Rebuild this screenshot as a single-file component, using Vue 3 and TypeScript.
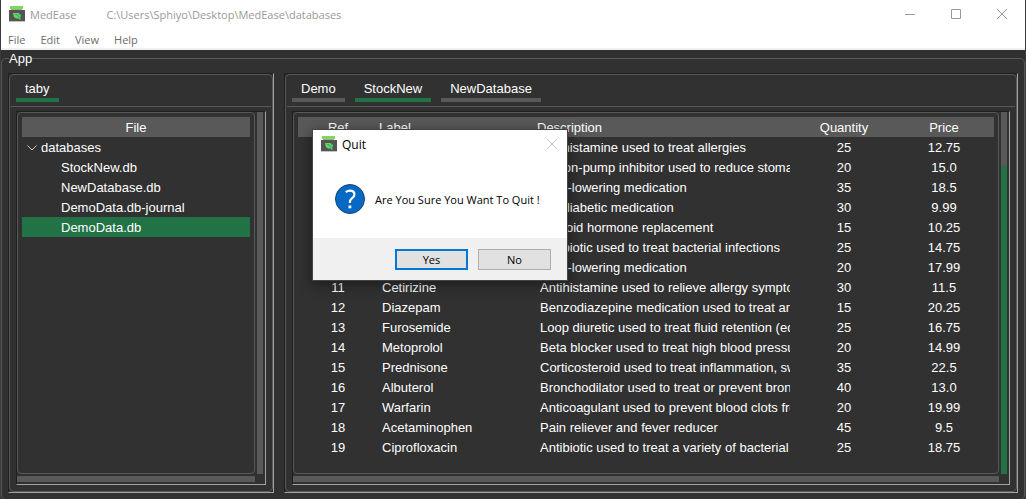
<script setup lang="ts">
import { ref } from 'vue'

interface StockRow {
  ref: number
  label: string
  description: string
  quantity: number
  price: string
}

const menus: string[] = ['File', 'Edit', 'View', 'Help']
const files: string[] = ['StockNew.db', 'NewDatabase.db', 'DemoData.db-journal', 'DemoData.db']
const tabs: string[] = ['Demo', 'StockNew', 'NewDatabase']
const selectedFile = ref('DemoData.db')
const activeTab = ref('StockNew')
const quitOpen = ref(true)

const rows: StockRow[] = [
  { ref: 4, label: 'Loratadine', description: 'Antihistamine used to treat allergies', quantity: 25, price: '12.75' },
  { ref: 5, label: 'Omeprazole', description: 'Proton-pump inhibitor used to reduce stomach', quantity: 20, price: '15.0' },
  { ref: 6, label: 'Atorvastatin', description: 'Lipid-lowering medication', quantity: 35, price: '18.5' },
  { ref: 7, label: 'Metformin', description: 'Antidiabetic medication', quantity: 30, price: '9.99' },
  { ref: 8, label: 'Levothyroxine', description: 'Thyroid hormone replacement', quantity: 15, price: '10.25' },
  { ref: 9, label: 'Azithromycin', description: 'Antibiotic used to treat bacterial infections', quantity: 25, price: '14.75' },
  { ref: 10, label: 'Simvastatin', description: 'Lipid-lowering medication', quantity: 20, price: '17.99' },
  { ref: 11, label: 'Cetirizine', description: 'Antihistamine used to relieve allergy symptoms', quantity: 30, price: '11.5' },
  { ref: 12, label: 'Diazepam', description: 'Benzodiazepine medication used to treat anxiety', quantity: 15, price: '20.25' },
  { ref: 13, label: 'Furosemide', description: 'Loop diuretic used to treat fluid retention (edema)', quantity: 25, price: '16.75' },
  { ref: 14, label: 'Metoprolol', description: 'Beta blocker used to treat high blood pressure', quantity: 20, price: '14.99' },
  { ref: 15, label: 'Prednisone', description: 'Corticosteroid used to treat inflammation, swelling', quantity: 35, price: '22.5' },
  { ref: 16, label: 'Albuterol', description: 'Bronchodilator used to treat or prevent bronchitis', quantity: 40, price: '13.0' },
  { ref: 17, label: 'Warfarin', description: 'Anticoagulant used to prevent blood clots from', quantity: 20, price: '19.99' },
  { ref: 18, label: 'Acetaminophen', description: 'Pain reliever and fever reducer', quantity: 45, price: '9.5' },
  { ref: 19, label: 'Ciprofloxacin', description: 'Antibiotic used to treat a variety of bacterial', quantity: 25, price: '18.75' },
]
</script>

<template>
  <div class="window">
    <header class="titlebar">
      <svg class="logo" viewBox="0 0 16 16" aria-hidden="true">
        <rect x="1" y="0" width="13" height="3" fill="#7ed957" />
        <rect x="2" y="3" width="11" height="1" fill="#a6a6a6" />
        <rect x="0" y="4" width="16" height="11" fill="#545454" />
        <rect x="0" y="15" width="16" height="1" fill="#c4c4c4" />
        <path d="M4 7h5l2 1 1 2-1 2 1 1.500h-1.500L9.500 12.500H7L5 11z" fill="#6fd65a" />
        <path d="M6 8.500h2v1.500h2v2M10 8.500h1.500" fill="none" stroke="#18b58c" />
      </svg>
      <span class="app-name">MedEase</span>
      <span class="path">C:\Users\Sphiyo\Desktop\MedEase\databases</span>
      <div class="controls">
        <button type="button" aria-label="Minimize">
          <svg viewBox="0 0 12 12"><path d="M1 5.500h10" /></svg>
        </button>
        <button type="button" aria-label="Maximize">
          <svg viewBox="0 0 12 12"><path d="M1.500 .5h9v9h-9z" /></svg>
        </button>
        <button type="button" aria-label="Close">
          <svg viewBox="0 0 12 12"><path d="M1 0l10 10M11 0L1 10" /></svg>
        </button>
      </div>
    </header>
    <nav class="menubar">
      <button v-for="m in menus" :key="m" type="button">{{ m }}</button>
    </nav>

    <main class="app-frame">
      <h1 class="legend">App</h1>

      <section class="pane side">
        <div class="pane-inner">
          <div class="tabs">
            <button type="button" class="tab active">taby</button>
          </div>
          <div class="well">
            <div class="view">
              <div class="file-head">File</div>
              <button type="button" class="node root" aria-expanded="true">
                <svg viewBox="0 0 10 6" aria-hidden="true"><path d="M.5 .5L5 5L9.500 .5" /></svg>
                databases
              </button>
              <button
                v-for="f in files"
                :key="f"
                type="button"
                class="node leaf"
                :class="{ selected: f === selectedFile }"
                @click="selectedFile = f"
              >{{ f }}</button>
            </div>
            <div class="vbar"></div>
            <div class="hbar"></div>
          </div>
        </div>
      </section>

      <section class="pane content">
        <div class="pane-inner">
          <div class="tabs">
            <button
              v-for="t in tabs"
              :key="t"
              type="button"
              class="tab"
              :class="{ active: t === activeTab }"
              @click="activeTab = t"
            >{{ t }}</button>
          </div>
          <div class="well">
            <div class="view">
              <table>
                <colgroup>
                  <col class="c-ref" />
                  <col class="c-label" />
                  <col class="c-desc" />
                  <col class="c-num" />
                  <col class="c-num" />
                </colgroup>
                <thead>
                  <tr>
                    <th>Ref</th>
                    <th class="left">Label</th>
                    <th class="left">Description</th>
                    <th>Quantity</th>
                    <th>Price</th>
                  </tr>
                </thead>
                <tbody>
                  <tr v-for="r in rows" :key="r.ref">
                    <td>{{ r.ref }}</td>
                    <td class="left">{{ r.label }}</td>
                    <td class="left"><div class="clip">{{ r.description }}</div></td>
                    <td>{{ r.quantity }}</td>
                    <td>{{ r.price }}</td>
                  </tr>
                </tbody>
              </table>
            </div>
            <div class="vbar"><div class="thumb"></div></div>
            <div class="hbar"></div>
          </div>
        </div>
      </section>
    </main>

    <div v-if="quitOpen" class="dialog" role="dialog" aria-labelledby="quit-title">
      <div class="dialog-title">
        <svg class="logo" viewBox="0 0 16 16" aria-hidden="true">
          <rect x="1" y="0" width="13" height="3" fill="#7ed957" />
          <rect x="2" y="3" width="11" height="1" fill="#a6a6a6" />
          <rect x="0" y="4" width="16" height="11" fill="#545454" />
          <rect x="0" y="15" width="16" height="1" fill="#c4c4c4" />
          <path d="M4 7h5l2 1 1 2-1 2 1 1.500h-1.500L9.500 12.500H7L5 11z" fill="#6fd65a" />
          <path d="M6 8.500h2v1.500h2v2M10 8.500h1.500" fill="none" stroke="#18b58c" />
        </svg>
        <span id="quit-title">Quit</span>
        <button type="button" class="dialog-close" aria-label="Close" @click="quitOpen = false">
          <svg viewBox="0 0 12 12"><path d="M1 0l10 10M11 0L1 10" /></svg>
        </button>
      </div>
      <div class="dialog-body">
        <svg class="question" viewBox="0 0 30 30" aria-hidden="true">
          <circle cx="15" cy="15" r="14.500" fill="#0669c4" stroke="#17456f" />
          <path d="M10.800 8.200C12 7.200 13.400 6.700 15 6.700c2.700 0 4.400 1.400 4.400 3.700 0 3.700-4.500 3.900-4.500 7.600v1" fill="none" stroke="#fff" stroke-width="2.200" />
          <rect x="13.500" y="21.500" width="2.800" height="2.800" fill="#fff" />
        </svg>
        <span>Are You Sure You Want To Quit !</span>
      </div>
      <div class="dialog-foot">
        <button type="button" class="default" @click="quitOpen = false">Yes</button>
        <button type="button" @click="quitOpen = false">No</button>
      </div>
    </div>
  </div>
</template>

<style>
body {
  background: #313131;
}
</style>

<style scoped>
* {
  box-sizing: border-box;
}
button {
  margin: 0;
  padding: 0;
  border: 0;
  background: none;
  color: inherit;
  font: inherit;
}
svg {
  display: block;
  flex: none;
}
.window {
  position: relative;
  display: flex;
  flex-direction: column;
  height: 100vh;
  overflow: hidden;
  border-left: 1px solid #3b3b3b;
  border-right: 1px solid #3b3b3b;
  background: #313131;
  color: #fff;
  font: 13px/18px "Liberation Sans", Arial, sans-serif;
}
.titlebar,
.menubar {
  display: flex;
  flex: none;
  align-items: center;
  background: #fff;
  font: 11px/16px "Open Sans", "Segoe UI", sans-serif;
}
.titlebar {
  height: 30px;
  padding-left: 8px;
  color: #999;
}
.logo {
  width: 16px;
  height: 16px;
  margin-bottom: 2px;
}
.app-name {
  margin-left: 5px;
}
.path {
  margin-left: 30px;
}
.controls {
  display: flex;
  margin-left: auto;
}
.controls button {
  display: grid;
  place-items: center;
  width: 46px;
  height: 30px;
}
.controls svg,
.dialog-close svg {
  width: 12px;
  height: 12px;
  fill: none;
  stroke: #999;
}
.menubar {
  gap: 15px;
  height: 20px;
  padding: 2px 0 0 7px;
  border-bottom: 2px solid #f0f0f0;
  color: #6d6d6d;
}
.app-frame {
  position: relative;
  display: flex;
  flex: 1;
  gap: 10px;
  min-height: 0;
  margin: 8px 0 -1px;
  padding: 14px 6px 6px;
  border: 1px solid #595959;
  border-radius: 5px;
}
.legend {
  position: absolute;
  top: -9px;
  left: 7px;
  margin: 0;
  background: #313131;
  font-size: 13px;
  font-weight: normal;
  line-height: 18px;
}
.pane,
.well {
  border: 1px solid;
  border-color: #1f1f1f #a3a3a3 #a3a3a3 #1f1f1f;
}
.side {
  flex: none;
  width: 266px;
}
.content {
  flex: 1;
  min-width: 0;
}
.pane-inner {
  display: flex;
  flex-direction: column;
  height: 100%;
  padding: 0 1px 6px;
  border: 1px solid #595959;
  border-radius: 5px;
}
.tabs {
  display: flex;
  flex: none;
  gap: 10px;
  height: 32px;
  padding: 4px 5px 4px;
  border-bottom: 1px solid #595959;
}
.tab {
  padding: 0 9px;
  border-bottom: 4px solid #595959;
}
.tab.active {
  border-color: #217346;
}
.well {
  display: grid;
  flex: 1;
  grid-template: minmax(0, 1fr) 6px / minmax(0, 1fr) 6px;
  gap: 2px;
  min-height: 0;
  margin: 4px 5px 0;
  padding: 0 2px 2px 0;
}
.view {
  overflow: hidden;
  padding: 4px;
  border: 1px solid #595959;
  border-radius: 4px;
}
.vbar,
.hbar {
  background: #595959;
}
.vbar {
  display: flex;
  align-items: flex-end;
}
.thumb {
  width: 100%;
  height: 85%;
  background: #217346;
}
.file-head {
  padding-top: 2px;
  background: #595959;
  text-align: center;
}
.node {
  display: flex;
  align-items: center;
  width: 100%;
  height: 20px;
  padding-top: 2px;
}
.root {
  gap: 4px;
  padding-left: 5px;
}
.root svg {
  width: 10px;
  height: 6px;
  fill: none;
  stroke: #d0d0d0;
}
.leaf {
  padding-left: 39px;
}
.selected {
  background: #217346;
}
table {
  width: 100%;
  table-layout: fixed;
  border-collapse: collapse;
}
.c-ref {
  width: 80px;
}
.c-label {
  width: 158px;
}
.c-num {
  width: 100px;
}
th,
td {
  height: 20px;
  padding: 2px 4px 0;
  font-weight: normal;
  text-align: center;
  white-space: nowrap;
}
th {
  background: #595959;
}
.left {
  text-align: left;
}
th.left {
  padding-left: 1px;
}
.clip {
  overflow: hidden;
}
.dialog {
  position: absolute;
  top: 130px;
  left: 312px;
  width: 254px;
  background: #fff;
  box-shadow: 0 0 0 1px #444, 0 3px 12px 2px rgba(0, 0, 0, 0.4);
  color: #000;
  font: 12px/16px "Open Sans", "Segoe UI", sans-serif;
}
.dialog-title {
  display: flex;
  align-items: center;
  gap: 5px;
  height: 30px;
  padding: 0 9px 0 8px;
}
.dialog-close {
  margin-left: auto;
}
.dialog-close svg {
  stroke: #c4c4c4;
}
.dialog-body {
  display: flex;
  align-items: center;
  gap: 10px;
  height: 78px;
  padding-left: 22px;
  font-size: 11px;
}
.dialog-body span {
  padding-top: 2px;
}
.question {
  width: 30px;
  height: 30px;
}
.dialog-foot {
  display: flex;
  align-items: center;
  justify-content: flex-end;
  gap: 10px;
  height: 42px;
  padding-right: 16px;
  background: #f0f0f0;
  font-size: 11px;
}
.dialog-foot button {
  width: 73px;
  height: 21px;
  padding-top: 1px;
  border: 1px solid #adadad;
  background: #e1e1e1;
}
.dialog-foot .default {
  border: 2px solid #0078d7;
}
</style>
